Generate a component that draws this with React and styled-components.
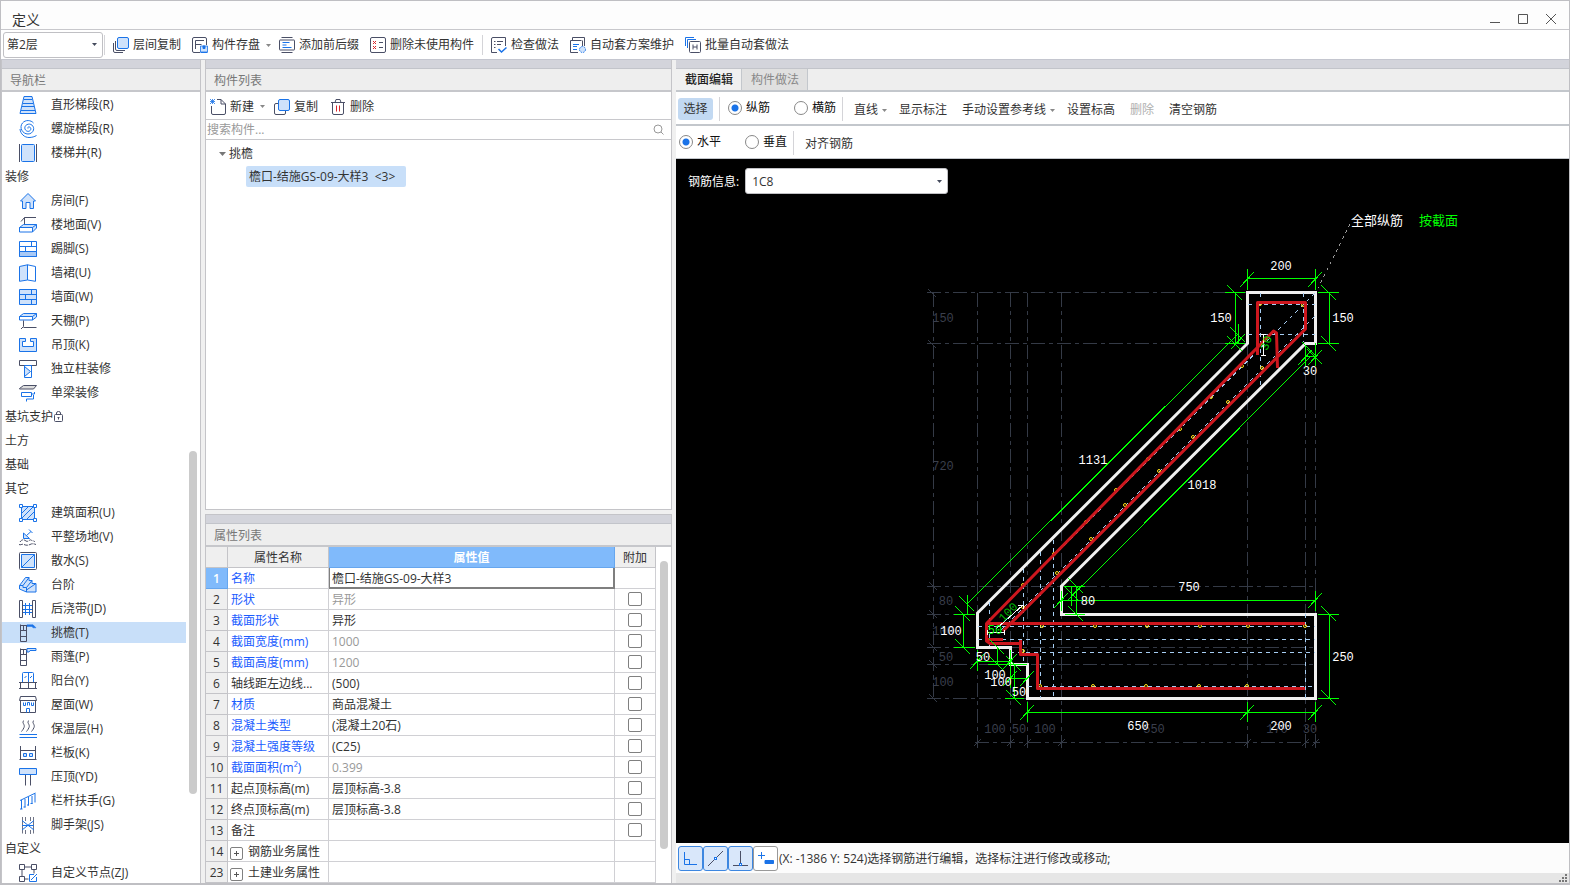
import React, { useState } from "react";
import styled, { createGlobalStyle } from "styled-components";

const B = "#1a73e8";
const D = "#4a4f66";
const F = "#cfe2fb";

// *********ICONS***************------------***********

const icons = {
  stair: (
    <>
      <path d="M5 .5h8l4 17H1z" fill={F} stroke={B} />
      <path d="M5 3.500h8M4 7.500h10M3 10.500h12M2 14.500h14" stroke={B} />
    </>
  ),
  spiral: (
    <path
      d="M9 8.500c-1-1.500 1.500-2.200 2.500-.8c1.200 2-1 4.300-3.300 3.500c-3-1-3.200-5-.4-6.500c3.800-2 7.700 1.300 6.700 5.300c-.8 2.500-3 4-5.500 4C3.500 14-.2 7.500 3.500 3c3-3.500 8.500-3 11 0M1 9c.5 5 4.500 8.500 9 8.500c3 0 5.500-.8 7.500-2"
      stroke={B}
    />
  ),
  well: (
    <>
      <rect x="2.500" y=".5" width="13" height="17" rx="1" fill={F} stroke={B} />
      <path d="M.5 0v18M17.500 0v18" stroke={D} />
    </>
  ),
  house: (
    <path
      d="M1.500 9L9 1.500L16.500 9H14.500V16.500H11V10.500H7V16.500H3.500V9z"
      fill={F}
      stroke={B}
    />
  ),
  floor: (
    <>
      <path d="M2 5.500L5.500 1.500H17M5.500 1.500V8" stroke={D} />
      <path d="M.5 11.500h13v4.500H.5z" fill="#fff" stroke={B} />
      <path d="M.5 11.500L4.500 8.500h13l-4 3zM17.500 8.500V12l-4 4v-4.500" fill={F} stroke={B} />
    </>
  ),
  skirting: (
    <>
      <path d="M.5 1.500h17v15H.5z" stroke={B} />
      <path d="M.5 11.500h17v5H.5z" fill="#a9c9f5" stroke={B} />
      <path d="M.5 6.500h17M6.500 6.500v5M12.500 1.500v5" stroke={B} />
    </>
  ),
  dado: (
    <>
      <path d="M.5 2.500L8.500 .8V16L.5 17.300z" fill={F} stroke={B} />
      <path d="M8.500 .8l8 1.700v14.800L8.500 16z" stroke={B} />
    </>
  ),
  wall: (
    <>
      <path d="M.5 1.500h17v15H.5z" fill={F} stroke={B} />
      <path d="M.5 6.500h17M.5 11.500h17M12.500 1.500v5M6.500 6.500v5M12.500 11.500v5" stroke={B} />
    </>
  ),
  ceiling: (
    <>
      <path d="M.5 4.500h13v3.500H.5z" fill="#fff" stroke={B} />
      <path d="M.5 4.500L4.500 1.500h13l-4 3zM17.500 1.500V5l-4 3v-3.500" fill={F} stroke={B} />
      <path d="M4.500 8.500V14.500L2 17M4.500 15.500H17.500" stroke={D} />
    </>
  ),
  drop: (
    <path
      d="M.5 2.500h6v3H3.500v5h11v-5h-3v-3h6v13H.5z"
      fill={F}
      stroke={B}
    />
  ),
  column: (
    <>
      <path d="M.5 .5h17v5H.5z" stroke={D} />
      <path d="M5.500 5.500h7v12h-7z" stroke={B} />
      <path d="M5.500 6.500l6 5l-6 5z" fill={F} stroke={B} />
    </>
  ),
  beam: (
    <>
      <path d="M.5 4.500L4.500 1.500h13l-3 3.500H.5z" fill="#ddd" stroke={D} />
      <path d="M2.500 8.500h10v4h-10zM12.500 10h3v-2M7.500 17.500v-2.500h7v-4" stroke={B} />
    </>
  ),
  area: (
    <>
      <path d="M2.500 2.500h13v13h-13z" fill={F} stroke={B} />
      <path d="M3 9l6-6M3 14L14 3M8 15l7-7" stroke={B} />
      <path d="M.5.5h3v3h-3zM14.500.5h3v3h-3zM.5 14.500h3v3h-3zM14.500 14.500h3v3h-3z" fill="#fff" stroke={B} />
    </>
  ),
  land: (
    <>
      <path d="M4.500 5v5.500h6zM7.500 7.500L12 3.500M10 1.500l3.500 3.500" fill={F} stroke={B} />
      <path d="M1 14c2-3 4-2.500 6-1s4-2 5-1s3 .5 4 2M0 16.500c2 1 3-1 5 0s4 1 6 0s3-1 6 0" stroke={D} strokeDasharray="4 1" />
    </>
  ),
  apron: (
    <>
      <rect x=".5" y=".5" width="17" height="17" rx="1" stroke={D} />
      <path d="M2.500 2.500h13v13h-13z" fill={F} stroke={B} />
      <path d="M2.500 15.500L15.500 2.500" stroke={B} />
    </>
  ),
  steps: (
    <>
      <path d="M.5 9.500L6.500 1.500H10v3h3v3h4v8.500H7.500l-7-3z" fill={F} stroke={B} />
      <path d="M.5 9.500H4v2h3.500V16M4 9.500L10 1.500M7.500 11.500L13 4.500M7.500 14L17 7.500" stroke={B} />
    </>
  ),
  strip: (
    <>
      <path d="M.5.5h3v17h-3zM13.500.5h3v17h-3z" stroke={D} />
      <path d="M6.500 3v12M10.500 3v12M4 5.500h9M4 9.500h9M4 12.500h9" stroke={B} />
    </>
  ),
  eave: (
    <>
      <path d="M1.500.5v17M1.500 1.500h7M7.500 1.500v16h-6M1.500 6.500h6M1.500 12.500h6M4.500 2v5" stroke={D} />
      <path d="M8 .8h6l3 3h-3L13 2.500H8z" fill={B} stroke={B} strokeWidth=".5" />
    </>
  ),
  canopy: (
    <>
      <path d="M1.500.5v17M7.500 1.500v16h-6M1.500 1.500h6M1.500 6.500h6M1.500 12.500h6M4.500 2v5" stroke={D} />
      <path d="M8 .5h9v2h-6l-1 1.500H8z" fill={F} stroke={B} />
    </>
  ),
  balcony: (
    <>
      <path d="M3.500 10.500v-9q0-1 1-1h9q1 0 1 1v9M9.500 .5v10M5.500 6l2-2M11 6l2-2" stroke={B} />
      <path d="M0 10.500h18M1.500 10.500v6M16.500 10.500v6M0 16.500h18M9.500 10.500v6" stroke={D} />
    </>
  ),
  roof: (
    <>
      <path d="M.5 4.500l1-4h15l1 4zM1.500 4.500v12h15v-12" stroke={D} />
      <path d="M4.500 6.500v3h2v-3M8.500 9.500v-3h2v3M12.500 6.500v3h2v-3M7.500 16.500v-4h3v4" stroke={B} />
    </>
  ),
  heat: (
    <>
      <path d="M5 .5c-3 2 1.500 4 0 7s-1 2-2.500 4M10 .5c-3 2 1.500 4 0 7s-1 2-2.500 4M15 .5c-3 2 1.500 4 0 7s-1 2-2.500 4" stroke={D} />
      <path d="M.5 14.500h17.500M.5 17.500h17.500" stroke={B} />
    </>
  ),
  board: (
    <>
      <path d="M1.500 2v14M16.500 2v14M1.500 6.500h15M.5 15.500h17" stroke={D} />
      <path d="M4.500 9.500h3v3h-3zM10.500 9.500h3v3h-3z" fill={F} stroke={B} />
    </>
  ),
  coping: (
    <>
      <path d="M.5.5h17v6H.5z" fill={F} stroke={B} />
      <path d="M6.500 7v10.500M11.500 7v10.500" stroke={D} />
    </>
  ),
  rail: (
    <path
      d="M1 8.500L16.500 1M2.500 8v9M6 7v8.500M9.500 5v8.500M13 4v8M16 1.500v9M1 17h2.500M4.500 15h2M8 13h2M11.500 11.500h2"
      stroke={B}
    />
  ),
  scaffold: (
    <>
      <path d="M3.500 1v16.500M14.500 1v16.500M6.500 1v4M11.500 1v4M6.500 14v4M11.500 14v4" stroke={D} strokeWidth=".8" />
      <path d="M3 4.500L15 14M15 4.500L3 14M3 9.500h12" stroke={B} />
    </>
  ),
  node: (
    <>
      <path d="M.5.5h5v5h-5zM12.500.5h5v5h-5zM.5 12.500h5v5h-5zM5.500 3h7M3 5.500v7M5.500 15h4M15 5.500v4" stroke={D} />
      <path d="M15 10.500h-4.500v7h7V13M12 16l6-6" stroke={B} />
    </>
  ),
};

const Glyph = ({ name }) => (
  <svg width="18" height="18" viewBox="0 0 18 18" fill="none" aria-hidden="true">
    {icons[name]}
  </svg>
);

const tools = {
  copyFloor: (
    <>
      <path d="M.5 6v8q0 1.500 1.500 1.500h8M2.500 4v8q0 1.500 1.500 1.500h8" stroke={D} />
      <rect x="4.500" y=".5" width="11" height="11" rx="1.500" fill={F} stroke={B} />
    </>
  ),
  save: (
    <>
      <path d="M8 15.500H2Q.5 15.500.5 14V2Q.5.5 2 .5h11q1.500 0 1.500 1.500V8M3.500 12V3.500H12M3.500 7.500h6" stroke={D} />
      <path d="M8.500 9h7v6h-7z" fill={F} stroke={B} strokeWidth=".8" />
      <path d="M11 9h2v2.500h-2zM8.500 15.500h7" fill={B} stroke={B} />
    </>
  ),
  prefix: (
    <>
      <path d="M2.500.5h11M2.500 15.500h11" stroke={D} />
      <path d="M.5 3.500v9q0 .5.5.5h14q.5 0 .5-.5v-9q0-.5-.5-.5H1q-.5 0-.5.500" stroke={D} />
      <path d="M3.500 5.500h7M3.500 8h4M3.500 10.500h9" stroke={B} />
    </>
  ),
  clean: (
    <>
      <rect x=".5" y=".5" width="15" height="15" rx="1.500" stroke={D} />
      <path d="M3 4l3 3M6 4L3 7M3 9l3 3M6 9l-3 3" stroke="#d9252a" />
      <path d="M9 5.500h4M9 10.500h4" stroke={D} />
    </>
  ),
  check: (
    <>
      <path d="M6 15.500H.5V2q0-1.500 1.500-1.500h12.500V9M3 4.500h1.500M6 4.500h6M3 7.500h1.500M6 7.500h4M3 10.500h1.500" stroke={D} />
      <path d="M7.500 12l3 3l5-4.500" stroke={B} strokeWidth="1.500" />
    </>
  ),
  scheme: (
    <>
      <path d="M2.500 3V.5h12V9M.5 3.500h11M.5 3.500v12H8M12.500 3.500V9" stroke={D} />
      <path d="M3 7.500h6M3 9.500h4M3 12.500h4" stroke={B} />
      <circle cx="12.500" cy="12.500" r="3" fill={F} stroke={B} strokeDasharray="1.500 1" />
    </>
  ),
  batch: (
    <>
      <path d="M.5 9V.5H9M2.500 11V2.500H11" stroke={B} />
      <rect x="4.500" y="4.500" width="11" height="11" rx="1" stroke={D} />
      <path d="M8 7.500v5M12 7.500v5M8 10h4" stroke={D} />
    </>
  ),
  create: (
    <>
      <path d="M1.500 7v7q0 1.500 1.500 1.500h11q1.500 0 1.500-1.500V5L11 .5H7M11 .5V5h4.500" stroke={D} />
      <path d="M0 0l5 5M5 0L0 5M0 2.500h5M2.500 0v5" stroke={B} strokeWidth=".8" />
    </>
  ),
  copy: (
    <>
      <path d="M4 4.500H2Q.5 4.500.5 6v8q0 1.500 1.500 1.500h8q1.500 0 1.500-1.500v-2" stroke={D} />
      <rect x="4.500" y=".5" width="11" height="11" rx="1.500" fill={F} stroke={B} />
    </>
  ),
  trash: (
    <>
      <path d="M1 3.500h14M5 3.500L6 .5h4l1 3M2.500 3.500V14q0 1.500 1.500 1.500h8q1.500 0 1.500-1.500V3.500" stroke={D} />
      <path d="M6.500 6.500v6M9.500 6.500v6" stroke="#d9252a" />
    </>
  ),
};

const Tool = ({ name }) => (
  <svg width="16" height="16" viewBox="0 0 16 16" fill="none" aria-hidden="true">
    {tools[name]}
  </svg>
);

const Caret = ({ color = "#888" }) => (
  <svg width="5" height="3" viewBox="0 0 5 3" aria-hidden="true">
    <path d="M0 0h5L2.500 3z" fill={color} />
  </svg>
);

// *********DATA***************------------***********

const navItems = [
  ["stair", "直形梯段(R)"],
  ["spiral", "螺旋梯段(R)"],
  ["well", "楼梯井(R)"],
  [null, "装修"],
  ["house", "房间(F)"],
  ["floor", "楼地面(V)"],
  ["skirting", "踢脚(S)"],
  ["dado", "墙裙(U)"],
  ["wall", "墙面(W)"],
  ["ceiling", "天棚(P)"],
  ["drop", "吊顶(K)"],
  ["column", "独立柱装修"],
  ["beam", "单梁装修"],
  [null, "基坑支护", true],
  [null, "土方"],
  [null, "基础"],
  [null, "其它"],
  ["area", "建筑面积(U)"],
  ["land", "平整场地(V)"],
  ["apron", "散水(S)"],
  ["steps", "台阶"],
  ["strip", "后浇带(JD)"],
  ["eave", "挑檐(T)"],
  ["canopy", "雨篷(P)"],
  ["balcony", "阳台(Y)"],
  ["roof", "屋面(W)"],
  ["heat", "保温层(H)"],
  ["board", "栏板(K)"],
  ["coping", "压顶(YD)"],
  ["rail", "栏杆扶手(G)"],
  ["scaffold", "脚手架(JS)"],
  [null, "自定义"],
  ["node", "自定义节点(ZJ)"],
];

const properties = [
  { no: 2, name: "形状", value: "异形", blue: true, muted: true },
  { no: 3, name: "截面形状", value: "异形", blue: true },
  { no: 4, name: "截面宽度(mm)", value: "1000", blue: true, muted: true },
  { no: 5, name: "截面高度(mm)", value: "1200", blue: true, muted: true },
  { no: 6, name: "轴线距左边线...", value: "(500)" },
  { no: 7, name: "材质", value: "商品混凝土", blue: true },
  { no: 8, name: "混凝土类型", value: "(混凝土20石)", blue: true },
  { no: 9, name: "混凝土强度等级", value: "(C25)", blue: true },
  { no: 10, name: "截面面积(m²)", value: "0.399", blue: true, muted: true },
  { no: 11, name: "起点顶标高(m)", value: "层顶标高-3.8" },
  { no: 12, name: "终点顶标高(m)", value: "层顶标高-3.8" },
  { no: 13, name: "备注", value: "" },
  { no: 14, name: "钢筋业务属性", value: "", group: true },
  { no: 23, name: "土建业务属性", value: "", group: true },
];

// [x, y, text]
const dims = [
  [1281, 270, "200"],
  [1221, 322, "150"],
  [1343, 322, "150"],
  [1310, 375, "30"],
  [1093, 464, "1131"],
  [1202, 489, "1018"],
  [1189, 591, "750"],
  [1088, 605, "80"],
  [951, 635, "100"],
  [983, 661, "50"],
  [995, 679, "100"],
  [1001, 686, "100"],
  [1019, 696, "50"],
  [1343, 661, "250"],
  [1138, 730, "650"],
  [1281, 730, "200"],
];
const axisDims = [
  [943, 322, "150"],
  [943, 470, "720"],
  [946, 605, "80"],
  [943, 635, "100"],
  [946, 661, "50"],
  [943, 686, "100"],
  [995, 733, "100"],
  [1019, 733, "50"],
  [1045, 733, "100"],
  [1154, 733, "550"],
  [1277, 733, "170"],
  [1310, 733, "30"],
];
const bars = [
  [1242, 366], [1262, 368], [1211, 397], [1228, 402], [1180, 429],
  [1193, 437], [1148, 459], [1159, 471], [1116, 490], [1125, 505],
  [1086, 522], [1091, 539], [1054, 554], [1057, 573], [1023, 585],
  [1023, 607], [1023, 651], [1260, 304], [1303, 305],
  [1042, 626], [1095, 626], [1147, 626], [1200, 626], [1248, 626],
  [1305, 626], [1040, 686], [1093, 686], [1146, 686], [1199, 686],
  [1247, 686],
];

// slash (/) and backslash (\) ticks at the end of dimension lines
const slash = ([x, y]) => `M${x - 7} ${y + 8}L${x + 7} ${y - 7}`;
const back = ([x, y]) => `M${x - 8} ${y - 8}L${x + 7} ${y + 7}`;

const slashes = [
  [1247, 279], [1315, 279], [1061, 600], [1315, 600], [1027, 712],
  [1247, 712], [1315, 712], [977, 661], [1010, 661], [1010, 678],
  [1027, 678], [1305, 357], [1315, 357], [1238, 341], [1075, 592],
];
const backs = [
  [1235, 293], [1235, 344], [1329, 293], [1329, 344], [963, 614],
  [963, 647], [1329, 614], [1329, 698], [967, 604], [997, 647],
  [997, 664], [1014, 664], [1014, 698], [1076, 586], [1076, 614],
  [1238, 335], [1310, 350], [1315, 357], [1072, 594],
];

const Drawing = () => (
  <Sheet role="img" aria-label="截面">
    <g transform="translate(-676 -159)" fill="none" shapeRendering="crispEdges">
      <path
        stroke="#343a46"
        strokeDasharray="14 4 4 4"
        d="M927 292.500H1247M927 343.500H1247M927 586.500H1315M927 614.500H977M927 647.500H1315M927 664.500H1315M927 698.500H1027M933.500 293V698M977.500 293V748M1010.500 293V748M1027.500 293V748M1061.500 293V748M1247.500 344V748M1305.500 344V748M1315.500 344V748M975 742.500H1320"
      />
      <path
        stroke="#343a46"
        d="M928 289l8 8M928 340l8 8M929 582l8 8M929 610l8 8M929 643l8 8M929 660l8 8M929 694l8 8M974 746l7-7M1007 746l7-7M1024 746l7-7M1058 746l7-7M1244 746l7-7M1302 746l7-7M1312 746l7-7"
      />
      <path
        stroke="#f0f0f0"
        strokeWidth="3"
        shapeRendering="auto"
        d="M1247.500 292.500H1315.500V343.500H1305.500L1061.500 586V614.500H1315.500V698.500H1027.500V664.500H1010.500V647.500H977.500V613L1247.500 343.500z"
      />
      <path
        stroke="#a6cdf2"
        strokeDasharray="4 4"
        d="M1260.500 293V387M1303.500 293V342M1305.500 614V698M1248 304.500H1315M1248 334.500H1315M978 626.500H1315M978 639.500H1315M1010 652.500H1315M1028 686.500H1315M989.500 602V647M1023.500 569V664M1040.500 552V698M1053.500 540V698M1315 293L989 621M1315 316L1000 631"
      />
      {bars.map(([x, y]) => (
        <circle key={x + "-" + y} cx={x} cy={y} r="1.500" stroke="#ffe01a" shapeRendering="auto" />
      ))}
      <path
        stroke="#cd171e"
        strokeWidth="3"
        strokeLinejoin="round"
        shapeRendering="auto"
        d="M1257.500 355V302.500H1305.500V329L1003 631M1277.500 368L1276.500 333L1273.500 331L987 623M1305 623.500H986.500V641L990 643.500H1020.500M1020.500 640V654.500H1037.500V688.500H1305M988 639.500H1003"
      />
      <path
        stroke="#00ff00"
        d="M1247.500 269V290M1315.500 269V290M1247 278.500H1315M1235.500 293V344M1225 292.500H1245M1225 343.500H1245M1329.500 293V344M1318 292.500H1339M1318 343.500H1339M1238.500 324V343M967.500 595V614M1238 334L967 604M1305.500 346V366M1315.500 343V366M1305 356.500H1315M1310 357L1078 590M1062 600.500H1315M1061.500 591V611M1315.500 591V611M1076.500 586V614M1065 586.500H1085M1065 614.500H1085M1071.500 586V606M963.500 614V647M954 614.500H975M954 647.500H975M977 661.500H1010M977.500 650V671M1010.500 650V688M997.500 647V664M988 664.500H1027M1010 678.500H1027M1014.500 664V698M1005 698.500H1024M1329.500 614V698M1318 614.500H1339M1318 698.500H1339M1027 712.500H1315M1027.500 702V722M1247.500 702V722M1315.500 702V722"
      />
      <path stroke="#00ff00" d={slashes.map(slash).concat(backs.map(back)).join("")} />
      <path
        stroke="#fff"
        d="M1263.500 334V355M1261 334.500H1266M1261 355.500H1266M987 632.500H1005M987.500 630V635M1004.500 630V635M996 629L1023 605M1018 605h5v4"
      />
      <path stroke="#999" strokeDasharray="3 4" d="M1350 224L1318 288" />
    </g>
    <DimText transform="translate(-676 -159)">
      {axisDims.map(([x, y, text]) => (
        <text key={x + "-" + y} x={x} y={y} fill="#3a3f4c">
          {text}
        </text>
      ))}
      <text x="1008" y="616" fill="#00b400" transform="rotate(-45 1008 612)">
        100
      </text>
      <text x="995" y="634" fill="#00ff00">
        50
      </text>
      <text x="1266" y="347" fill="#00d400" transform="rotate(-70 1266 343)">
        30
      </text>
      {dims.map(([x, y, text]) => (
        <text key={x + "-" + y} x={x} y={y} fill="#fff">
          {text}
        </text>
      ))}
      <Note x="1351" y="225" fill="#fff">
        全部纵筋
      </Note>
      <Note x="1419" y="225" fill="#00ff00">
        按截面
      </Note>
    </DimText>
  </Sheet>
);

export default function App() {
  const [current, setCurrent] = useState("挑檐(T)");
  const [barType, setBarType] = useState("纵筋");
  const [direction, setDirection] = useState("水平");
  const [name, setName] = useState("檐口-结施GS-09-大样3");

  const radio = (group, label, value, onChange) => (
    <Radio>
      <input
        type="radio"
        name={group}
        checked={value === label}
        onChange={() => onChange(label)}
      />
      {label}
    </Radio>
  );

  // ***************BODY**************-------___---------____-__-_--_----___-__
  return (
    <Window>
      <GlobalStyle />
      <TitleBar>
        <h1>定义</h1>
        <WindowButtons>
          <button type="button" aria-label="最小化">
            <svg width="12" height="12" fill="none" stroke="#555">
              <path d="M1 9.500h10" />
            </svg>
          </button>
          <button type="button" aria-label="最大化">
            <svg width="12" height="12" fill="none" stroke="#555">
              <path d="M1.500 1.500h9v9h-9z" />
            </svg>
          </button>
          <button type="button" aria-label="关闭">
            <svg width="12" height="12" fill="none" stroke="#555">
              <path d="M1 1l10 10M11 1L1 11" />
            </svg>
          </button>
        </WindowButtons>
      </TitleBar>

      <MainToolbar>
        <FloorSelect>
          <select aria-label="楼层">
            <option>第2层</option>
          </select>
          <Caret color="#444a5c" />
        </FloorSelect>
        <Divider />
        <ToolButton>
          <Tool name="copyFloor" />
          层间复制
        </ToolButton>
        <ToolButton>
          <Tool name="save" />
          构件存盘
          <CaretBox>
            <Caret />
          </CaretBox>
        </ToolButton>
        <ToolButton>
          <Tool name="prefix" />
          添加前后缀
        </ToolButton>
        <ToolButton>
          <Tool name="clean" />
          删除未使用构件
        </ToolButton>
        <Divider />
        <ToolButton>
          <Tool name="check" />
          检查做法
        </ToolButton>
        <ToolButton>
          <Tool name="scheme" />
          自动套方案维护
        </ToolButton>
        <ToolButton>
          <Tool name="batch" />
          批量自动套做法
        </ToolButton>
      </MainToolbar>

      <Columns>
        <Panel as="nav">
          <Strip />
          <PanelTitle>导航栏</PanelTitle>
          <NavList>
            {navItems.map(([icon, label, locked]) => (
              <li key={label}>
                <NavItem
                  type="button"
                  $child={!!icon}
                  $active={label === current}
                  onClick={() => icon && setCurrent(label)}
                >
                  {icon && <Glyph name={icon} />}
                  <span>{label}</span>
                  {locked && (
                    <svg width="10" height="12" fill="none" stroke={D} aria-hidden="true">
                      <rect x=".5" y="3.500" width="8" height="7" rx="1" />
                      <path d="M2.500 3.500V2q0-1.500 2-1.500t2 1.500v1.500M4.500 6v2.500M3.500 6.500h2" />
                    </svg>
                  )}
                </NavItem>
              </li>
            ))}
            <Thumb $top="359px" $height="343px" $right="3px" />
          </NavList>
        </Panel>

        <Middle>
          <Panel $grow>
            <Strip />
            <PanelTitle>构件列表</PanelTitle>
            <ListToolbar>
              <ToolButton>
                <Tool name="create" />
                新建
                <CaretBox>
                  <Caret />
                </CaretBox>
              </ToolButton>
              <ToolButton>
                <Tool name="copy" />
                复制
              </ToolButton>
              <ToolButton>
                <Tool name="trash" />
                删除
              </ToolButton>
            </ListToolbar>
            <Search>
              <input type="search" placeholder="搜索构件..." aria-label="搜索构件" />
              <svg width="11" height="11" fill="none" stroke="#999" aria-hidden="true">
                <circle cx="5" cy="5" r="4" />
                <path d="M8 8l2.500 2.500" />
              </svg>
            </Search>
            <Tree>
              <li>
                <TreeButton type="button">
                  <svg width="7" height="4" aria-hidden="true">
                    <path d="M0 0h7L3.500 4z" fill="#777" />
                  </svg>
                  挑檐
                </TreeButton>
                <ul>
                  <li>
                    <TreeLeaf type="button">檐口-结施GS-09-大样3 &nbsp;&lt;3&gt;</TreeLeaf>
                  </li>
                </ul>
              </li>
            </Tree>
          </Panel>

          <Panel $top>
            <Strip />
            <PanelTitle>属性列表</PanelTitle>
            <TableArea>
              <Table>
                <colgroup>
                  <col width="22" />
                  <col width="101" />
                  <col />
                  <col width="41" />
                </colgroup>
                <thead>
                  <tr>
                    <th aria-label="序号" />
                    <th>属性名称</th>
                    <Active>属性值</Active>
                    <th>附加</th>
                  </tr>
                </thead>
                <tbody>
                  <tr>
                    <Active scope="row">1</Active>
                    <NameCell $blue>名称</NameCell>
                    <EditCell>
                      <input
                        aria-label="名称"
                        value={name}
                        onChange={(e) => setName(e.target.value)}
                      />
                    </EditCell>
                    <td />
                  </tr>
                  {properties.map((row) => (
                    <tr key={row.no}>
                      <th scope="row">{row.no}</th>
                      <NameCell $blue={row.blue}>
                        {row.group && (
                          <Expand type="button" aria-label={"展开" + row.name}>
                            <svg width="7" height="7" stroke="#555">
                              <path d="M1 3.500h5M3.500 1v5" />
                            </svg>
                          </Expand>
                        )}
                        {row.name}
                      </NameCell>
                      <ValueCell $muted={row.muted}>{row.value}</ValueCell>
                      <CheckCell>
                        {!row.group && (
                          <input type="checkbox" aria-label={"附加 " + row.name} />
                        )}
                      </CheckCell>
                    </tr>
                  ))}
                </tbody>
              </Table>
              <Thumb $top="14px" $height="288px" $right="3px" />
            </TableArea>
          </Panel>
        </Middle>

        <Editor>
          <Strip />
          <Tabs role="tablist">
            <Tab type="button" role="tab" aria-selected="true" $active>
              截面编辑
            </Tab>
            <Tab type="button" role="tab" aria-selected="false">
              构件做法
            </Tab>
          </Tabs>
          <EditorBar $line="2px">
            <SelectButton type="button">选择</SelectButton>
            <Divider />
            <RadioGroup>
              {radio("bar", "纵筋", barType, setBarType)}
              {radio("bar", "横筋", barType, setBarType)}
            </RadioGroup>
            <Divider />
            <TextButtons>
              <TextButton type="button">
                直线
                <CaretBox>
                  <Caret />
                </CaretBox>
              </TextButton>
              <TextButton type="button">显示标注</TextButton>
              <TextButton type="button">
                手动设置参考线
                <CaretBox>
                  <Caret />
                </CaretBox>
              </TextButton>
              <TextButton type="button">设置标高</TextButton>
              <TextButton type="button" disabled>
                删除
              </TextButton>
              <TextButton type="button">清空钢筋</TextButton>
            </TextButtons>
          </EditorBar>
          <EditorBar $line="1px">
            <RadioGroup>
              {radio("direction", "水平", direction, setDirection)}
              {radio("direction", "垂直", direction, setDirection)}
            </RadioGroup>
            <Divider />
            <TextButtons>
              <TextButton type="button">对齐钢筋</TextButton>
            </TextButtons>
          </EditorBar>
          <Canvas>
            <Drawing />
            <BarInfo>
              <label htmlFor="bar-info">钢筋信息:</label>
              <InfoSelect>
                <select id="bar-info">
                  <option>1C8</option>
                </select>
                <Caret color="#444a5c" />
              </InfoSelect>
            </BarInfo>
          </Canvas>
          <StatusBar>
            <SnapButton type="button" aria-label="正交" $on>
              <svg width="15" height="15" fill="none" stroke={B}>
                <path d="M1.500 1v12.500H14M1.500 8.500h5v5" />
              </svg>
            </SnapButton>
            <SnapButton type="button" aria-label="中点" $on>
              <svg width="15" height="15" fill="none" stroke={D}>
                <path d="M0 15L15 0" />
                <rect x="6.500" y="6.500" width="2" height="2" fill="#fff" stroke={B} />
              </svg>
            </SnapButton>
            <SnapButton type="button" aria-label="垂点" $on>
              <svg width="15" height="15" fill="none" stroke={D}>
                <path d="M0 14.500h15M7.500 0v13" />
                <rect x="6.500" y="12.500" width="2" height="2" fill="#fff" stroke={B} />
              </svg>
            </SnapButton>
            <SnapButton type="button" aria-label="动态输入">
              <svg width="16" height="15" fill="none" stroke={B}>
                <path d="M0 4.500h7M3.500 1v7" />
                <path d="M7 9.500h8.500v3H7z" fill={B} />
              </svg>
            </SnapButton>
            <Status>(X: -1386 Y: 524)选择钢筋进行编辑，选择标注进行修改或移动;</Status>
          </StatusBar>
          <Footer>
            <svg width="10" height="8" fill="#777" aria-hidden="true">
              <path d="M7 0h2v2H7zM4 3h2v2H4zM7 3h2v2H7zM1 6h2v2H1zM4 6h2v2H4zM7 6h2v2H7z" />
            </svg>
          </Footer>
        </Editor>
      </Columns>
    </Window>
  );
}

// *********STYLES***************------------***********

const GlobalStyle = createGlobalStyle`
  * {
    box-sizing: border-box;
  }
  body {
    margin: 0;
    color: #333;
    font: 12px/20px "Open Sans", "Noto Sans CJK SC", sans-serif;
  }
  button, input, select {
    font: inherit;
    color: inherit;
    margin: 0;
    padding: 0;
    border: 0;
    background: none;
    outline: none;
  }
  select {
    appearance: none;
  }
  ul {
    list-style: none;
    margin: 0;
    padding: 0;
  }
  svg {
    flex: none;
    display: block;
  }
`;
const Window = styled.div`
  display: flex;
  flex-direction: column;
  height: 100vh;
  overflow: hidden;
  background: #f0f0f0;
  border: 1px solid #bfbfc3;
  border-bottom-width: 2px;
`;
const TitleBar = styled.header`
  display: flex;
  flex: none;
  justify-content: space-between;
  align-items: center;
  height: 29px;
  padding: 8px 12px 0 11px;
  background: #fdfdfd;
  border-bottom: 1px solid #c8c8cc;
  h1 {
    margin: 0;
    padding-top: 2px;
    font-size: 14px;
    font-weight: 400;
  }
`;
const WindowButtons = styled.div`
  display: flex;
  gap: 16px;
`;
const MainToolbar = styled.div`
  display: flex;
  flex: none;
  align-items: center;
  gap: 11px;
  height: 30px;
  padding-left: 2px;
  background: #fff;
  border-bottom: 1px solid #c4c6cf;
`;
const ToolButton = styled.button.attrs({ type: "button" })`
  display: flex;
  align-items: center;
  gap: 4px;
  padding-top: 1px;
  white-space: nowrap;
`;
const CaretBox = styled.span`
  display: flex;
  justify-content: flex-end;
  width: 7px;
  margin-right: -3px;
`;
const Divider = styled.i`
  width: 1px;
  height: 20px;
  margin: 0 -3px;
  background: #d4d4d8;
`;
const SelectBox = styled.div`
  position: relative;
  display: flex;
  align-items: center;
  background: #fff;
  border: 1px solid #c0c0c4;
  border-radius: 3px;
  select {
    width: 100%;
    height: 100%;
  }
  svg {
    position: absolute;
    right: 5px;
    pointer-events: none;
  }
`;
const FloorSelect = styled(SelectBox)`
  width: 100px;
  height: 26px;
  margin-right: -7px;
  select {
    padding-left: 3px;
  }
`;
const InfoSelect = styled(SelectBox)`
  width: 203px;
  height: 26px;
  color: #333;
  select {
    padding: 1px 0 0 6px;
  }
`;
const Columns = styled.main`
  display: grid;
  flex: 1;
  min-height: 0;
  grid-template-columns: 200px 467px minmax(0, 1fr);
  gap: 4px;
`;
const Middle = styled.div`
  display: flex;
  flex-direction: column;
  gap: 4px;
  min-height: 0;
`;
const Panel = styled.section`
  display: flex;
  flex-direction: column;
  min-height: 0;
  flex: ${(p) => (p.$grow ? "1" : "none")};
  background: #fff;
  border: 1px solid #c4c4c8;
  border-top-width: ${(p) => (p.$top ? "1px" : "0")};
  border-bottom-width: ${(p) => (p.$grow ? "1px" : "0")};
`;
const Strip = styled.div`
  flex: none;
  height: 9px;
  background: #d3d4db;
  border-bottom: 1px solid #c2c4ca;
`;
const PanelTitle = styled.h2`
  flex: none;
  height: 23px;
  margin: 0;
  padding-left: 8px;
  font-size: 12px;
  font-weight: 400;
  line-height: 23px;
  color: #777;
  background: #eee;
  border-bottom: 2px solid #c6c7cb;
`;
const NavList = styled.ul`
  position: relative;
  flex: 1;
  min-height: 0;
  overflow: hidden;
`;
const NavItem = styled.button`
  display: flex;
  align-items: center;
  width: calc(100% - 14px);
  height: 24px;
  padding-left: ${(p) => (p.$child ? "17px" : "3px")};
  gap: ${(p) => (p.$child ? "14px" : "1px")};
  border: solid transparent;
  border-width: 2px 0 1px;
  background: ${(p) => (p.$active ? "#c8dff9" : "none")} padding-box;
  white-space: nowrap;
`;
const Thumb = styled.i`
  position: absolute;
  top: ${(p) => p.$top};
  right: ${(p) => p.$right};
  width: 8px;
  height: ${(p) => p.$height};
  background: #cbcbcb;
  border-radius: 4px;
`;
const ListToolbar = styled.div`
  display: flex;
  flex: none;
  align-items: center;
  gap: 12px;
  height: 28px;
  padding: 1px 0 0 4px;
  border-bottom: 1px solid #c8c8cc;
`;
const Search = styled.div`
  display: flex;
  flex: none;
  align-items: center;
  height: 20px;
  padding: 0 7px 0 1px;
  border-bottom: 1px solid #c8c8cc;
  input {
    flex: 1;
    appearance: none;
  }
  input::placeholder {
    color: #999;
  }
`;
const Tree = styled.ul`
  flex: 1;
  padding: 3px 0 0 13px;
  ul {
    padding-left: 27px;
  }
  li {
    min-height: 24px;
  }
`;
const TreeButton = styled.button`
  display: flex;
  align-items: center;
  gap: 3px;
  height: 22px;
`;
const TreeLeaf = styled.button`
  height: 21px;
  margin-top: 1px;
  padding: 0 11px 0 3px;
  line-height: 21px;
  background: #c8dff9;
  border-radius: 2px;
`;
const TableArea = styled.div`
  position: relative;
  padding-right: 15px;
`;
const Table = styled.table`
  width: 100%;
  table-layout: fixed;
  border-collapse: separate;
  border-spacing: 0;
  th,
  td {
    height: 21px;
    padding: 2px 0 0 3px;
    line-height: 18px;
    border: solid #d0d0d4;
    border-width: 0 1px 1px 0;
    white-space: nowrap;
    overflow: hidden;
  }
  th {
    padding: 2px 0 0;
    font-weight: 400;
    text-align: center;
    background: #efefef;
    border-color: #c4c4c8;
  }
`;
const Active = styled.th`
  && {
    color: #fff;
    font-weight: 600;
    background: #80bafb;
    border-color: #66a6ee;
  }
`;
const NameCell = styled.td`
  color: ${(p) => (p.$blue ? "#1a5cff" : "#333")};
`;
const ValueCell = styled.td`
  color: ${(p) => (p.$muted ? "#999" : "#333")};
`;
const EditCell = styled.td`
  && {
    padding: 0;
    border: solid #7f7f7f;
    border-width: 0 2px 2px 1px;
  }
  input {
    display: block;
    width: 100%;
    height: 19px;
    padding: 1px 0 0 2px;
    line-height: 18px;
  }
`;
const CheckCell = styled.td`
  && {
    padding: 0;
  }
  input {
    display: block;
    appearance: none;
    width: 14px;
    height: 14px;
    margin: 0 auto;
    border: 1px solid #808080;
    border-radius: 2px;
  }
`;
const Expand = styled.button`
  display: inline-flex;
  align-items: center;
  justify-content: center;
  width: 13px;
  height: 13px;
  margin: -4px 5px 0 -1px;
  vertical-align: -1px;
  border: 1px solid #808080;
  border-radius: 2px;
`;
const Editor = styled.section`
  display: flex;
  flex-direction: column;
  min-width: 0;
  min-height: 0;
`;
const Tabs = styled.div`
  display: flex;
  flex: none;
  height: 23px;
  background: #eee;
  border-bottom: 2px solid #c3c7cc;
`;
const Tab = styled.button`
  padding: 0 8px 0 9px;
  color: ${(p) => (p.$active ? "#222" : "#888")};
  font-weight: ${(p) => (p.$active ? 500 : 400)};
  background: ${(p) => (p.$active ? "#f0f0f0" : "#e0e0e0")};
  border-right: 1px solid #c3c7cc;
`;
const EditorBar = styled.div`
  display: flex;
  flex: none;
  align-items: center;
  height: ${(p) => (p.$line === "2px" ? "34px" : "33px")};
  padding: 1px 0 0 3px;
  background: #fff;
  border-bottom: ${(p) => p.$line} solid #c3c7cc;
  ${Divider} {
    height: 24px;
    margin: 0 8px 0 6px;
  }
`;
const SelectButton = styled.button`
  width: 35px;
  height: 22px;
  margin-left: -1px;
  padding-top: 1px;
  background: #c2d9f2;
  border-radius: 3px;
`;
const RadioGroup = styled.div`
  display: flex;
  gap: 24px;
  padding-bottom: 2px;
`;
const Radio = styled.label`
  display: flex;
  align-items: center;
  gap: 4px;
  color: #111;
  input {
    appearance: none;
    width: 14px;
    height: 14px;
    border: 1px solid #888;
    border-radius: 50%;
  }
  input:checked {
    background: radial-gradient(circle, ${B} 3px, transparent 4px);
  }
`;
const TextButtons = styled.div`
  display: flex;
  gap: 15px;
  padding: 3px 0 0 3px;
`;
const TextButton = styled.button`
  display: flex;
  align-items: center;
  gap: 2px;
  white-space: nowrap;
  &:disabled {
    color: #b0b0b0;
  }
`;
const Canvas = styled.div`
  position: relative;
  flex: 1;
  min-height: 0;
  overflow: hidden;
  background: #000;
`;
const Sheet = styled.svg`
  width: 100%;
  height: 100%;
`;
const DimText = styled.g`
  font: 12px "Liberation Mono", monospace;
  text-anchor: middle;
`;
const Note = styled.text`
  font: 13px "Noto Sans CJK SC", sans-serif;
  text-anchor: start;
`;
const BarInfo = styled.div`
  position: absolute;
  top: 9px;
  left: 12px;
  display: flex;
  align-items: center;
  gap: 6px;
  color: #fff;
  label {
    padding-top: 1px;
  }
`;
const StatusBar = styled.div`
  display: flex;
  flex: none;
  align-items: center;
  height: 30px;
  padding-left: 2px;
  background: #fcfcfc;
`;
const Status = styled.span`
  padding: 2px 0 0 1px;
`;
const SnapButton = styled.button`
  display: flex;
  align-items: center;
  justify-content: center;
  width: 25px;
  height: 25px;
  background: ${(p) => (p.$on ? "#d9e7fa" : "#fff")};
  border: 1px solid ${(p) => (p.$on ? "#3d87e0" : "#999")};
  border-radius: 3px;
`;
const Footer = styled.footer`
  display: flex;
  flex: none;
  justify-content: flex-end;
  height: 10px;
  padding: 1px;
  background: #e6e6e6;
`;
